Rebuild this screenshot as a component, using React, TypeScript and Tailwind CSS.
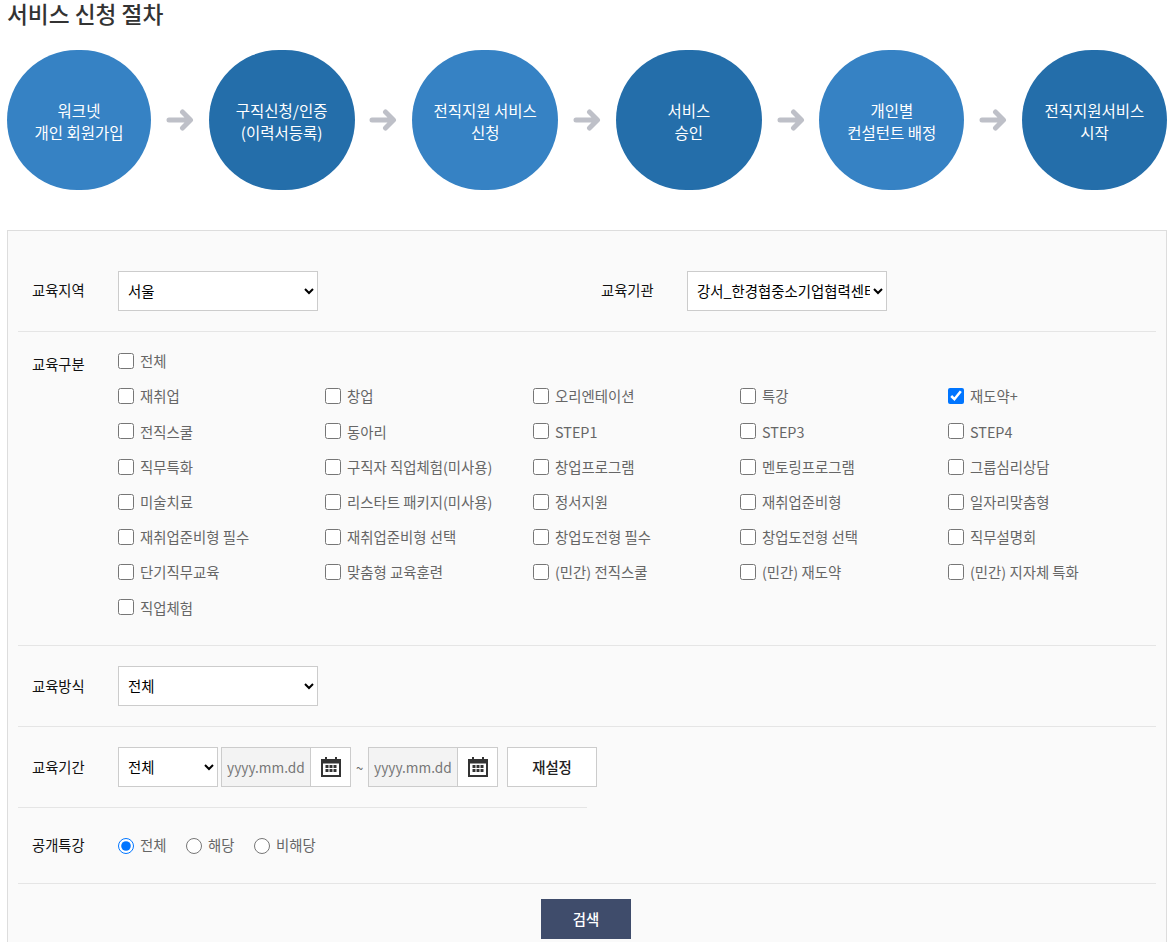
import type { ReactNode } from 'react'

const steps = [
  { lines: ['워크넷', '개인 회원가입'], cls: 'w-[144px] bg-[#3682c4]' },
  { lines: ['구직신청/인증', '(이력서등록)'], cls: 'w-[146px] bg-[#246eaa]' },
  { lines: ['전직지원 서비스', '신청'], cls: 'w-[146px] bg-[#3682c4]' },
  { lines: ['서비스', '승인'], cls: 'w-[146px] bg-[#246eaa]' },
  { lines: ['개인별', '컨설턴트 배정'], cls: 'w-[145px] bg-[#3682c4]' },
  { lines: ['전직지원서비스', '시작'], cls: 'w-[145px] bg-[#246eaa]' },
]

const types = [
  '재취업', '창업', '오리엔테이션', '특강', '재도약+',
  '전직스쿨', '동아리', 'STEP1', 'STEP3', 'STEP4',
  '직무특화', '구직자 직업체험(미사용)', '창업프로그램', '멘토링프로그램', '그룹심리상담',
  '미술치료', '리스타트 패키지(미사용)', '정서지원', '재취업준비형', '일자리맞춤형',
  '재취업준비형 필수', '재취업준비형 선택', '창업도전형 필수', '창업도전형 선택', '직무설명회',
  '단기직무교육', '맞춤형 교육훈련', '(민간) 전직스쿨', '(민간) 재도약', '(민간) 지자체 특화',
  '직업체험',
]

function Arrow() {
  return (
    <svg width="28" height="22" viewBox="0 0 28 22" className="shrink-0" fill="none" stroke="#bec0c8" strokeWidth="5" strokeLinecap="round" strokeLinejoin="round">
      <path d="M3 11h21M16.5 3l8 8-8 8" />
    </svg>
  )
}

function CalendarIcon() {
  return (
    <svg width="20" height="20" viewBox="0 0 20 20" fill="#333">
      <path d="M4 0h2v2h8V0h2v2h4v18H0V2h4V0zM2 6.5V18h16V6.5H2z" />
      <path d="M4.5 8h3v3h-3zM8.5 8h3v3h-3zM12.5 8h3v3h-3zM4.5 12h3v3h-3zM8.5 12h3v3h-3zM12.5 12h3v3h-3z" />
    </svg>
  )
}

function Check({ label, checked }: { label: string; checked?: boolean }) {
  return (
    <label className="flex items-center gap-[6px] h-[20px] text-[14.4px] text-[#666]">
      <input type="checkbox" defaultChecked={checked} className="w-[16px] h-[16px] m-0 shrink-0" />
      <span>{label}</span>
    </label>
  )
}

function Radio({ label, checked }: { label: string; checked?: boolean }) {
  return (
    <label className="flex items-center gap-[6px] text-[14.4px] text-[#666]">
      <input type="radio" name="open" defaultChecked={checked} className="w-[16px] h-[16px] m-0 shrink-0" />
      <span className="pb-[2px]">{label}</span>
    </label>
  )
}

function Label({ children }: { children: ReactNode }) {
  return <div className="w-[86px] shrink-0 pb-[2px] text-[14.3px] text-[#111]">{children}</div>
}

const selectCls = 'h-[40px] border border-[#ccc] bg-white pl-[5px] pb-[2px] text-[14.4px] text-black'

function DateField() {
  return (
    <div className="flex">
      <input
        type="text"
        placeholder="yyyy.mm.dd"
        className="w-[90px] h-[40px] border border-[#ccc] bg-[#f3f3f3] px-[5px] text-[13.7px] text-[#777] placeholder:text-[#777]"
      />
      <button className="w-[40px] h-[40px] border border-l-0 border-[#ccc] bg-white flex items-center justify-center">
        <CalendarIcon />
      </button>
    </div>
  )
}

export default function App() {
  return (
    <div className="bg-white text-[#222] font-['Noto_Sans_CJK_KR','Noto_Sans',sans-serif] h-[942px] overflow-hidden">
      <div className="px-[7px]">
        <h2 className="h-[50px] text-[22.7px] leading-[27px] font-medium text-[#333]">서비스 신청 절차</h2>

        <div className="flex items-center justify-between h-[140px]">
          {steps.map((s, i) => (
            <div key={i} className="contents">
              {i > 0 && <Arrow />}
              <div className={'h-[140px] rounded-full flex flex-col items-center justify-center pt-[1px] text-white text-[15.5px] leading-[22px] ' + s.cls}>
                <span>{s.lines[0]}</span>
                <span>{s.lines[1]}</span>
              </div>
            </div>
          ))}
        </div>

        <div className="mt-[40px] border border-[#ddd] bg-[#fafafa] px-[10px]">
          <div className="flex items-center pt-[40px] pb-[20px] border-b border-[#e5e5e5] pl-[14px]">
            <Label>교육지역</Label>
            <select className={selectCls + ' w-[200px]'}>
              <option>서울</option>
            </select>
            <div className="ml-[283px]">
              <Label>교육기관</Label>
            </div>
            <select className={selectCls + ' w-[200px]'}>
              <option>강서_한경협중소기업협력센터</option>
            </select>
          </div>

          <div className="flex pt-[19px] pb-[28px] border-b border-[#e5e5e5] pl-[14px]">
            <div className="pt-[2px]">
              <Label>교육구분</Label>
            </div>
            <div className="flex-1">
              <Check label="전체" />
              <div className="grid grid-cols-[207px_208px_207px_208px_1fr] gap-y-[15.2px] mt-[15.2px]">
                {types.map((t) => (
                  <Check key={t} label={t} checked={t === '재도약+'} />
                ))}
              </div>
            </div>
          </div>

          <div className="flex items-center py-[20px] border-b border-[#e5e5e5] pl-[14px]">
            <Label>교육방식</Label>
            <select className={selectCls + ' w-[200px]'}>
              <option>전체</option>
            </select>
          </div>

          <div className="flex items-center py-[20px] pl-[14px]">
            <Label>교육기간</Label>
            <select className={selectCls + ' w-[100px] mr-[3px]'}>
              <option>전체</option>
            </select>
            <DateField />
            <span className="w-[17px] text-center text-[13px] text-[#666]">~</span>
            <DateField />
            <button className="ml-[9px] w-[90px] h-[40px] pb-[2px] border border-[#ccc] bg-white text-[14.4px] font-medium text-[#222]">재설정</button>
          </div>
          <div className="w-[569px] border-t border-[#e5e5e5]" />

          <div className="flex items-center h-[76px] border-b border-[#e5e5e5] pl-[14px]">
            <Label>공개특강</Label>
            <div className="flex items-center gap-[19.5px]">
              <Radio label="전체" checked />
              <Radio label="해당" />
              <Radio label="비해당" />
            </div>
          </div>

          <div className="flex justify-center pt-[15px] pb-[40px] pr-[2px]">
            <button className="w-[90px] h-[40px] pb-[2px] bg-[#3f4c6b] text-white text-[14.4px] font-medium">검색</button>
          </div>
        </div>
      </div>
    </div>
  )
}
